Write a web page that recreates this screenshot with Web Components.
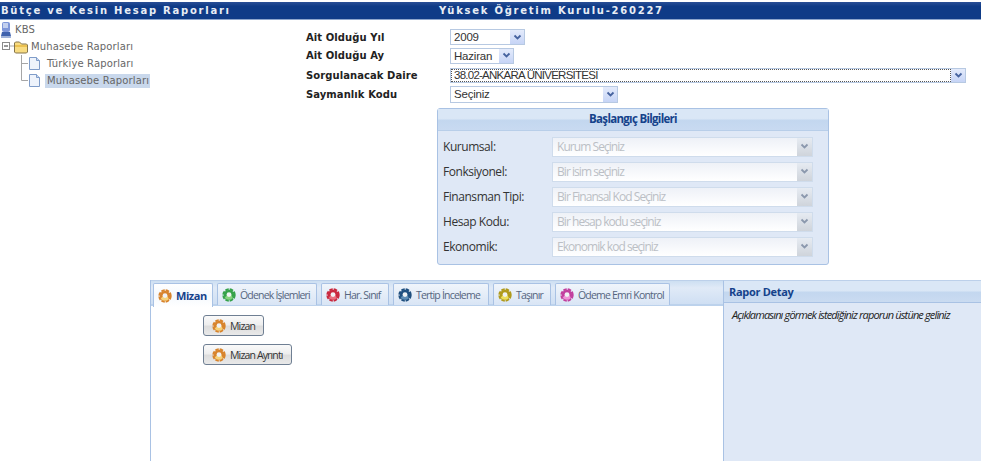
<!DOCTYPE html>
<html lang="tr">
<head>
<meta charset="utf-8">
<title>Bütçe ve Kesin Hesap Raporları</title>
<style>
  html, body { margin: 0; padding: 0; background: #fff; overflow: hidden; }
  body { width: 981px; height: 461px; font-family: "DejaVu Sans", sans-serif; }
</style>
</head>
<body>
<report-page></report-page>

<script>
const arrow = `<svg width="9" height="7" viewBox="0 0 9 7"><path d="M1.500 1.500 4.500 4.500 7.500 1.500" fill="none" stroke="currentColor" stroke-width="1.800"/></svg>`

class GearIcon extends HTMLElement {
  constructor (...props) {
    super(...props)
    const c = this.getAttribute('color') || '#d8842c'
    const h = this.getAttribute('light') || '#f6d27a'
    this.attachShadow({mode: 'open'}).innerHTML = `
      <style>:host { display: inline-block; width: 14px; height: 14px; flex: none; } svg { display: block; }</style>
      <svg width="14" height="14" viewBox="0 0 14 14">
        <circle cx="7" cy="7" r="5.700" fill="none" stroke="${c}" stroke-width="2" stroke-dasharray="3.500 .98"/>
        <circle cx="7" cy="7" r="5.200" fill="${c}"/>
        <path d="M2.800 9.500a4.900 4.900 0 0 0 8 .5l-1.300-3H5z" fill="${h}"/>
        <circle cx="7" cy="6.600" r="2.400" fill="#f0f2f4"/>
      </svg>`
  }
}

class TitleBar extends HTMLElement {
  constructor (...props) {
    super(...props)
    this.attachShadow({mode: 'open'}).innerHTML = `
      <style>
        :host {
          display: grid;
          grid-template-columns: 439px 1fr;
          height: 17px;
          margin-top: 2px;
          border-bottom: 1px solid #8ea6cc;
          background: linear-gradient(#2a4f96, #0f3b87 25%, #0f3b87);
          color: #e8edf5;
          font: bold 10px/17px "DejaVu Sans", sans-serif;
          letter-spacing: 1.75px;
          white-space: nowrap;
        }
        div { padding-left: 1px; }
        div + div { padding-left: 0; }
      </style>
      <div>Bütçe ve Kesin Hesap Raporları</div>
      <div>Yüksek Öğretim Kurulu-260227</div>`
  }
}

class TreeNode extends HTMLElement {
  static get icons () {
    return {
      server: `<svg width="10" height="16" viewBox="0 0 10 16"><rect x="1" y="0" width="8" height="10" rx="2" fill="#7e96d8"/><rect x="2" y="1" width="5" height="5" fill="#c3d0ee"/><path d="M1 10h8l1 4H0z" fill="#3f62ad"/><rect x="0" y="14" width="10" height="2" fill="#9fb2d8"/></svg>`,
      folder: `<svg width="14" height="14" viewBox="0 0 14 14"><path d="M.500 4V3l1-1h4l2 2h5l1 1v7l-1 1h-11l-1-1z" fill="#f8dc82" stroke="#85754a"/><path d="M1 6h12" stroke="#e7b93f" stroke-width="1.500"/></svg>`,
      page: `<svg width="13" height="15" viewBox="0 0 13 15"><path d="M1.500 1.500h7l3 3v9h-10z" fill="#eef3fb" stroke="#7f9cc9"/><path d="M8.500 1.500v3h3" fill="#c9d8ef" stroke="#7f9cc9"/></svg>`
    }
  }
  constructor (...props) {
    super(...props)
    const name = this.getAttribute('icon')
    const icon = TreeNode.icons[name]
    const gap = {server: 2, folder: 1, page: 4}[name]
    const indent = this.getAttribute('indent') || 0
    const lead = this.getAttribute('lead') || ''
    const leadSvg = lead === 'box'
      ? `<svg width="14" height="17" viewBox="0 0 14 17"><rect x="2.500" y="4.500" width="7" height="7" fill="#fff" stroke="#8a8a8a"/><path d="M4 8h4" stroke="#333"/><path d="M10 8h4" stroke="#aaa"/></svg>`
      : `<svg width="13" height="17" viewBox="0 0 13 17"><path d="M6.500 -1V8.500H13${lead === 'top' ? 'M6.500 8V17' : ''}" stroke="#a6a6a6" fill="none"/></svg>`
    this.attachShadow({mode: 'open'}).innerHTML = `
      <style>
        :host { display: flex; align-items: center; height: 17px; padding-left: ${indent}px; color: #666; font: 10px/14px "DejaVu Sans", sans-serif; letter-spacing: .13px; white-space: nowrap; }
        .lead { display: flex; flex: none; }
        .icon { display: flex; flex: none; margin-right: ${gap}px; }
        .label { padding: 0 1px 0 2px; }
        :host([selected]) .label { background: #c9d8ec; }
      </style>
      ${lead ? `<span class="lead">${leadSvg}</span>` : ''}
      <span class="icon">${icon}</span>
      <span class="label"><slot></slot></span>`
  }
}

class FormSelect extends HTMLElement {
  constructor (...props) {
    super(...props)
    const w = this.getAttribute('width') || 100
    const h = this.getAttribute('height') || 16
    this.attachShadow({mode: 'open'}).innerHTML = `
      <style>
        :host { display: flex; align-items: center; box-sizing: border-box; width: ${w}px; height: ${h}px; border: 1px solid #b7c9e2; background: #fff; color: #333; font: 11.500px/14px "Liberation Sans", sans-serif; letter-spacing: -.2px; white-space: nowrap; }
        :host([focused]) { letter-spacing: -.75px; }
        .text { flex: 1; padding-left: 3px; overflow: hidden; }
        :host([focused]) .text { outline: 1px dotted #555; outline-offset: -1px; align-self: stretch; line-height: ${h - 3}px; }
        .btn { display: flex; align-items: center; justify-content: center; flex: none; width: 14px; height: 100%; background: linear-gradient(#e4ebfb, #c6d4f6); color: #46639f; }
      </style>
      <span class="text"><slot></slot></span>
      <span class="btn">${arrow}</span>`
  }
}

class FormRow extends HTMLElement {
  constructor (...props) {
    super(...props)
    this.attachShadow({mode: 'open'}).innerHTML = `
      <style>
        :host { display: grid; grid-template-columns: 144px 1fr; align-items: center; height: ${this.getAttribute('height') || 19}px; color: #222; font: bold 10px "DejaVu Sans", sans-serif; letter-spacing: .07px; white-space: nowrap; }
      </style>
      <span><slot name="label"></slot></span>
      <span><slot></slot></span>`
  }
}

class ComboField extends HTMLElement {
  constructor (...props) {
    super(...props)
    this.attachShadow({mode: 'open'}).innerHTML = `
      <style>
        :host { display: grid; grid-template-columns: 109px 261px; align-items: center; height: 25px; font: 12px "Open Sans", sans-serif; letter-spacing: -.45px; color: #333; white-space: nowrap; }
        .box { display: flex; align-items: center; box-sizing: border-box; height: 20px; border: 1px solid #cfdcec; background: linear-gradient(#eef1f7, #fafbfd 70%, #fff); color: #bbbfc5; font-size: 12px; letter-spacing: -.95px; }
        .box span { flex: 1; padding-left: 4px; }
        .box b { display: flex; align-items: center; justify-content: center; width: 15px; height: 100%; background: linear-gradient(#e6ebf2, #cfd4db); color: #8b98ad; }
      </style>
      <span><slot name="label"></slot></span>
      <div class="box"><span><slot></slot></span><b>${arrow}</b></div>`
  }
}

class InfoPanel extends HTMLElement {
  constructor (...props) {
    super(...props)
    this.attachShadow({mode: 'open'}).innerHTML = `
      <style>
        :host { display: block; box-sizing: border-box; width: 392px; height: 157px; margin-left: 437px; border: 1px solid #a9c2e4; border-radius: 3px; background: #dfe8f6; }
        header { height: 21px; background: linear-gradient(#dae7f6 45%, #c3d7ef 55%, #c8daf1); border-bottom: 1px solid #b8cee9; color: #15428b; font: bold 11.500px/20px "Open Sans", sans-serif; letter-spacing: -.7px; text-align: center; }
        .body { display: flex; flex-direction: column; padding: 3px 0 0 5px; }
      </style>
      <header>${this.getAttribute('heading')}</header>
      <div class="body"><slot></slot></div>`
  }
}

class TabItem extends HTMLElement {
  constructor (...props) {
    super(...props)
    this.attachShadow({mode: 'open'}).innerHTML = `
      <style>
        :host { display: flex; align-items: center; gap: 4px; box-sizing: border-box; width: ${this.getAttribute('width')}px; height: 22px; padding: 0 0 0 4px; margin-top: 2px; border: 1px solid #a9c2e4; border-bottom: 0; border-radius: 2px 2px 0 0; background: linear-gradient(#f0f5fb, #d9e5f5); color: #55657e; font: 10.500px "Open Sans", sans-serif; letter-spacing: -.8px; white-space: nowrap; overflow: hidden; }
        :host([active]) { height: 24px; background: linear-gradient(#fff, #f4f8fd 50%, #fff); color: #15428b; font-size: 11px; font-weight: bold; letter-spacing: -.45px; }
      </style>
      <slot name="icon"></slot><slot></slot>`
  }
}

class TabPanel extends HTMLElement {
  constructor (...props) {
    super(...props)
    this.attachShadow({mode: 'open'}).innerHTML = `
      <style>
        :host { display: block; box-sizing: border-box; width: 573px; height: 181px; border-left: 1px solid #a9c2e4; background: #fff; }
        .strip { display: flex; box-sizing: border-box; height: 26px; padding-left: 2px; gap: 4px; background: linear-gradient(#cddff2, #e0eaf7 30%, #cfdff3); border-top: 1px solid #bcd0ea; border-bottom: 2px solid #bcd2ec; }
        .body { display: flex; flex-direction: column; align-items: flex-start; gap: 8px; padding: 9px 0 0 52px; }
      </style>
      <div class="strip"><slot name="tab"></slot></div>
      <div class="body"><slot></slot></div>`
  }
}

class GearButton extends HTMLElement {
  constructor (...props) {
    super(...props)
    this.attachShadow({mode: 'open'}).innerHTML = `
      <style>
        :host { display: flex; align-items: center; gap: 4px; box-sizing: border-box; height: 21px; padding: 0 8px; border: 1px solid #6f7f93; border-radius: 3px; background: linear-gradient(#fafafa, #eee 45%, #ddd 55%, #e9e9e9); color: #333; font: 10.500px "Open Sans", sans-serif; letter-spacing: -.85px; white-space: nowrap; }
      </style>
      <gear-icon></gear-icon><slot></slot>`
  }
}

class DetailPanel extends HTMLElement {
  constructor (...props) {
    super(...props)
    this.attachShadow({mode: 'open'}).innerHTML = `
      <style>
        :host { display: block; box-sizing: border-box; width: 258px; height: 181px; border-left: 1px solid #a9c2e4; border-top: 1px solid #bcd0ea; background: #dfe8f6; }
        header { box-sizing: border-box; height: 22px; padding-left: 5px; background: linear-gradient(#dae7f6 45%, #c3d7ef 55%, #cadbf1); border-bottom: 1px solid #a9c2e4; color: #15428b; font: bold 11px/21px "Open Sans", sans-serif; letter-spacing: -.3px; }
        p { margin: 0; padding: 4px 0 0 8px; color: #222; font: italic 11px/16px "Open Sans", sans-serif; letter-spacing: -.85px; white-space: nowrap; }
      </style>
      <header>${this.getAttribute('heading')}</header>
      <p><slot></slot></p>`
  }
}

class ReportPage extends HTMLElement {
  constructor (...props) {
    super(...props)
    this.attachShadow({mode: 'open'}).innerHTML = `
      <style>
        :host { display: block; width: 981px; height: 461px; overflow: hidden; }
        .top { display: grid; grid-template-columns: 306px 1fr; height: 260px; }
        .tree { padding-top: 1px; }
        .form { padding-top: 8px; }
        info-panel { margin-left: 131px; margin-top: 5px; }
        .bottom { display: flex; padding-left: 150px; }
      </style>
      <title-bar></title-bar>
      <div class="top">
        <div class="tree">
          <tree-node icon="server" indent="1">KBS</tree-node>
          <tree-node icon="folder" lead="box">Muhasebe Raporları</tree-node>
          <tree-node icon="page" indent="15" lead="top">Türkiye Raporları</tree-node>
          <tree-node icon="page" indent="15" lead="end" selected>Muhasebe Raporları</tree-node>
        </div>
        <div class="form">
          <form-row height="18"><span slot="label">Ait Olduğu Yıl</span><form-select width="75" height="16">2009</form-select></form-row>
          <form-row height="19"><span slot="label">Ait Olduğu Ay</span><form-select width="64" height="16">Haziran</form-select></form-row>
          <form-row height="20"><span slot="label">Sorgulanacak Daire</span><form-select width="516" height="15" focused>38.02-ANKARA ÜNİVERSİTESİ</form-select></form-row>
          <form-row height="18"><span slot="label">Saymanlık Kodu</span><form-select width="168" height="17">Seçiniz</form-select></form-row>
          <info-panel heading="Başlangıç Bilgileri">
            <combo-field><span slot="label">Kurumsal:</span>Kurum Seçiniz</combo-field>
            <combo-field><span slot="label">Fonksiyonel:</span>Bir isim seçiniz</combo-field>
            <combo-field><span slot="label">Finansman Tipi:</span>Bir Finansal Kod Seçiniz</combo-field>
            <combo-field><span slot="label">Hesap Kodu:</span>Bir hesap kodu seçiniz</combo-field>
            <combo-field><span slot="label">Ekonomik:</span>Ekonomik kod seçiniz</combo-field>
          </info-panel>
        </div>
      </div>
      <div class="bottom">
        <tab-panel>
          <tab-item slot="tab" width="60" active><gear-icon slot="icon"></gear-icon>Mizan</tab-item>
          <tab-item slot="tab" width="100"><gear-icon slot="icon" color="#35a24a" light="#86d47f"></gear-icon>Ödenek İşlemleri</tab-item>
          <tab-item slot="tab" width="68"><gear-icon slot="icon" color="#c9283e" light="#e9707f"></gear-icon>Har. Sınıf</tab-item>
          <tab-item slot="tab" width="96"><gear-icon slot="icon" color="#1f4f7f" light="#5f8db5"></gear-icon>Tertip İnceleme</tab-item>
          <tab-item slot="tab" width="58"><gear-icon slot="icon" color="#b09a1c" light="#ecdf5e"></gear-icon>Taşınır</tab-item>
          <tab-item slot="tab" width="115"><gear-icon slot="icon" color="#c23f9e" light="#ee92d6"></gear-icon>Ödeme Emri Kontrol</tab-item>
          <gear-button>Mizan</gear-button>
          <gear-button>Mizan Ayrıntı</gear-button>
        </tab-panel>
        <detail-panel heading="Rapor Detay">Açıklamasını görmek istediğiniz raporun üstüne geliniz</detail-panel>
      </div>`
  }
}

customElements.define('gear-icon', GearIcon)
customElements.define('title-bar', TitleBar)
customElements.define('tree-node', TreeNode)
customElements.define('form-select', FormSelect)
customElements.define('form-row', FormRow)
customElements.define('combo-field', ComboField)
customElements.define('info-panel', InfoPanel)
customElements.define('tab-item', TabItem)
customElements.define('tab-panel', TabPanel)
customElements.define('gear-button', GearButton)
customElements.define('detail-panel', DetailPanel)
customElements.define('report-page', ReportPage)
</script>
</body>
</html>
